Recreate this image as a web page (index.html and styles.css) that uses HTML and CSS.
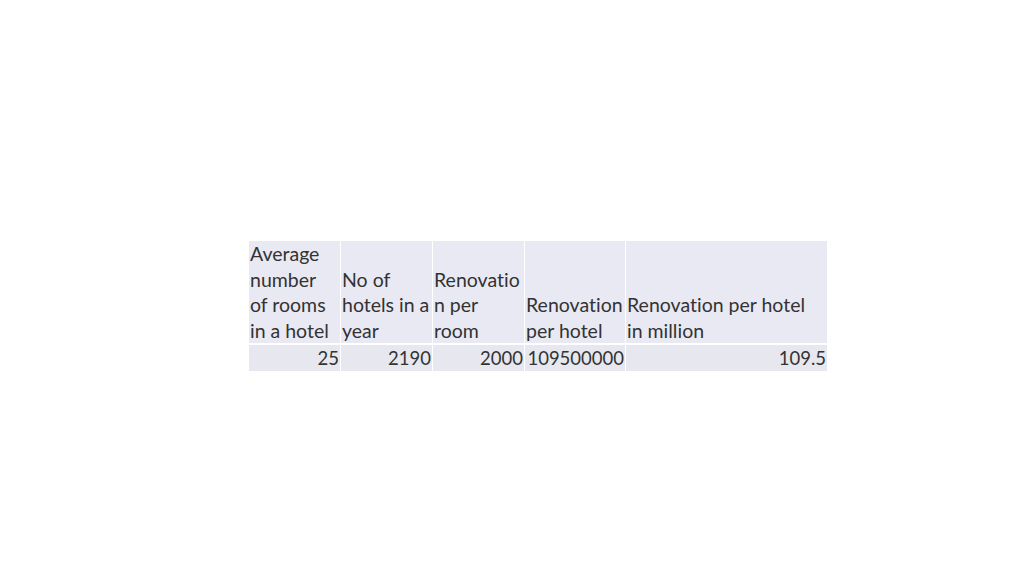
FILE: index.html
```html
<!DOCTYPE html>
<html>
<head>
<meta charset="utf-8">
<link rel="stylesheet" href="styles.css">
</head>
<body>
<div class="page">
  <div class="sheet">
    <div class="cell head">Average<br>number<br>of rooms<br>in a hotel</div>
    <div class="cell head">No of<br>hotels in a<br>year</div>
    <div class="cell head">Renovatio<br>n per<br>room</div>
    <div class="cell head">Renovation<br>per hotel</div>
    <div class="cell head">Renovation per hotel<br>in million</div>
    <div class="cell num">25</div>
    <div class="cell num">2190</div>
    <div class="cell num">2000</div>
    <div class="cell num">109500000</div>
    <div class="cell num">109.5</div>
  </div>
</div>
</body>
</html>
```
FILE: styles.css
```css
html, body {
  margin: 0;
  padding: 0;
  background: #ffffff;
}
.page {
  width: 1024px;
  height: 576px;
  padding-top: 241px;
  padding-left: 249px;
  box-sizing: border-box;
}
.sheet {
  display: grid;
  grid-template-columns: 91px 91px 91px 100px 201px;
  grid-template-rows: 102px 26px;
  column-gap: 1px;
  row-gap: 2px;
  width: max-content;
}
.cell {
  background: #e9e9f3;
  font-family: Lato, "Open Sans", sans-serif;
  font-size: 19.5px;
  line-height: 25.5px;
  font-variant-ligatures: none;
  color: #333333;
  white-space: nowrap;
  overflow: visible;
  padding: 0 1px;
}
.head {
  display: flex;
  flex-direction: column;
  justify-content: flex-end;
}
.num {
  text-align: right;
  background: #e7e7f0;
  font-size: 18.5px;
  line-height: 27px;
}
```
